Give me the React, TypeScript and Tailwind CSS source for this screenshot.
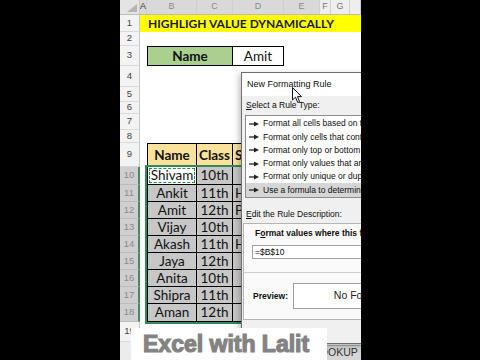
import type { ReactNode } from 'react'

const students = [
  { name: 'Shivam', cls: '10th', sub: '' },
  { name: 'Ankit', cls: '11th', sub: 'Hindi' },
  { name: 'Amit', cls: '12th', sub: 'Physics' },
  { name: 'Vijay', cls: '10th', sub: '' },
  { name: 'Akash', cls: '11th', sub: 'Hindi' },
  { name: 'Jaya', cls: '12th', sub: '' },
  { name: 'Anita', cls: '10th', sub: '' },
  { name: 'Shipra', cls: '11th', sub: '' },
  { name: 'Aman', cls: '12th', sub: '' },
]

// row 10..18 heights
const bodyHeights = ['h-[18px]', 'h-[17px]', 'h-[17px]', 'h-[17px]', 'h-[17px]', 'h-[17px]', 'h-[17px]', 'h-[17px]', 'h-[18px]']

const rowHeads = [
  { n: 1, h: 'h-[17px]' },
  { n: 2, h: 'h-[14px]' },
  { n: 3, h: 'h-[20px]' },
  { n: 4, h: 'h-[21px]' },
  { n: 5, h: 'h-[15px]' },
  { n: 6, h: 'h-[12px]' },
  { n: 7, h: 'h-[16px]' },
  { n: 8, h: 'h-[13px]' },
  { n: 9, h: 'h-[24px]' },
  ...bodyHeights.map((h, i) => ({ n: 10 + i, h })),
  { n: 19, h: 'h-[20px]' },
]

const rules = [
  'Format all cells based on their values',
  'Format only cells that contain',
  'Format only top or bottom ranked values',
  'Format only values that are above or below average',
  'Format only unique or duplicate values',
  'Use a formula to determine which cells to format',
]

function RuleArrow() {
  return (
    <svg width="10" height="6" viewBox="0 0 10 6" className="shrink-0">
      <line x1="0" y1="3" x2="6" y2="3" stroke="#222" strokeWidth="1.3" />
      <polygon points="5,0.5 10,3 5,5.5" fill="#222" />
    </svg>
  )
}

function ColumnHeader() {
  const cols: { w: string; label: string; light?: boolean }[] = [
    { w: 'w-[7px]', label: 'A' },
    { w: 'w-[50px]', label: 'B' },
    { w: 'w-[36px]', label: 'C' },
    { w: 'w-[51px]', label: 'D' },
    { w: 'w-[36px]', label: 'E' },
    { w: 'w-[11px]', label: 'F', light: true },
    { w: 'w-[19px]', label: 'G', light: true },
    { w: 'w-[11px]', label: '', light: true },
  ]
  return (
    <div className="flex h-[15px] border-b border-[#bdbdbd] font-['Liberation_Sans',sans-serif] text-[9px]">
      <div className="relative w-[20px] shrink-0 bg-[#e4e4e4] border-r border-[#c8c8c8]">
        <svg width="10" height="8" viewBox="0 0 10 8" className="absolute right-[2px] bottom-[2px]">
          <polygon points="10,0 10,8 0,8" fill="#b4b4b4" />
        </svg>
      </div>
      {cols.map((c, i) => (
        <div
          key={i}
          className={`${c.w} shrink-0 flex items-center justify-center border-r border-[#cfcfcf] ${
            c.light ? 'bg-[#eeeeee] text-[#777]' : 'bg-[#d9d9d9] text-[#8a8a8a]'
          } ${c.label === 'A' ? 'text-[#333]' : ''}`}
        >
          {c.label}
        </div>
      ))}
    </div>
  )
}

function Cell({ w, children, className = '' }: { w: string; children?: ReactNode; className?: string }) {
  return (
    <div className={`${w} shrink-0 h-full flex items-center justify-center border-r border-b border-black ${className}`}>
      {children}
    </div>
  )
}

function Sheet() {
  return (
    <div className="flex">
      {/* row headers */}
      <div className="w-[20px] shrink-0 flex flex-col font-['Liberation_Sans',sans-serif] text-[9.5px]">
        {rowHeads.map((r) => {
          const sel = r.n >= 10 && r.n <= 18
          return (
            <div
              key={r.n}
              className={`${r.h} flex items-center justify-center border-b ${
                sel
                  ? 'bg-[#cfcfcf] text-[#8b8b8b] border-[#bcbcbc] border-r-2 border-r-[#3f8f5d]'
                  : 'bg-[#f3f3f3] text-[#444] border-[#dadada] border-r border-r-[#c8c8c8]'
              }`}
            >
              {r.n}
            </div>
          )
        })}
      </div>

      {/* cells */}
      <div className="w-[221px] shrink-0 flex flex-col">
        {/* row 1 */}
        <div className="h-[17px] bg-[#ffff00] flex items-center pl-[8px] text-[12px] font-bold text-[#1a1a1a] whitespace-nowrap">
          HIGHLIGH VALUE DYNAMICALLY
        </div>
        <div className="h-[14px]" />
        {/* row 3 */}
        <div className="h-[20px] flex">
          <div className="w-[7px] shrink-0" />
          <div className="w-[86px] shrink-0 h-full flex items-center justify-center bg-[#a9d08e] border border-black text-[13.5px] font-bold text-[#111]">
            Name
          </div>
          <div className="w-[51px] shrink-0 h-full flex items-center justify-center bg-white border border-l-0 border-black text-[13.5px] text-[#111]">
            Amit
          </div>
        </div>
        <div className="h-[21px]" />
        <div className="h-[15px]" />
        <div className="h-[12px]" />
        <div className="h-[16px]" />
        <div className="h-[13px]" />

        {/* table rows 9..18 */}
        <div className="flex">
          <div className="w-[7px] shrink-0" />
          <div className="w-[137px] shrink-0 flex flex-col text-[13.5px] text-[#111]">
            <div className="h-[24px] flex border-t border-l border-black bg-[#fbe29a] font-bold">
              <Cell w="w-[49px]">Name</Cell>
              <Cell w="w-[36px]">Class</Cell>
              <Cell w="w-[51px]" className="justify-start pl-[2px]">
                Subject
              </Cell>
            </div>
            <div className="relative z-10 flex flex-col border-l border-black ring-2 ring-[#2f8a55]">
              {students.map((s, i) => (
                <div key={s.name} className={`${bodyHeights[i]} flex bg-[#c7c7c7]`}>
                  <Cell w="w-[49px]" className={i === 0 ? 'bg-white p-[1px]' : ''}>
                    {i === 0 ? (
                      <div className="w-full h-full flex items-center justify-center border border-dashed border-[#2f8a55]">
                        {s.name}
                      </div>
                    ) : (
                      s.name
                    )}
                  </Cell>
                  <Cell w="w-[36px]">{s.cls}</Cell>
                  <Cell w="w-[51px]" className="justify-start pl-[2px]">
                    {s.sub}
                  </Cell>
                </div>
              ))}
            </div>
          </div>
        </div>
        <div className="h-[20px]" />
      </div>
    </div>
  )
}

function TabBar() {
  return (
    <div className="h-[18px] flex bg-[#ececec] font-['Liberation_Sans',sans-serif]">
      <div className="w-[180px] shrink-0" />
      <div className="mt-[3px] h-[15px] w-[70px] shrink-0 flex items-center pl-[6px] bg-[#d6d6d6] border-t border-l border-[#a9a9a9] text-[10.5px] text-[#333]">
        VLOOKUP
      </div>
    </div>
  )
}

function Dialog() {
  return (
    <div className="absolute z-30 left-[121px] top-[72px] w-[210px] h-[272px] bg-[#f0f0f0] border border-[#6e6e6e] shadow-[-2px_2px_6px_rgba(0,0,0,0.25)] font-['Liberation_Sans',sans-serif] text-[#0d0d0d]">
      <div className="h-[23px] bg-white flex items-center pl-[5px] text-[9px]">New Formatting Rule</div>
      <div className="h-[17px] flex items-end pl-[4px] pb-[1px] text-[8.5px]">
        <span>
          <u>S</u>elect a Rule Type:
        </span>
      </div>
      <div className="ml-[3px] mt-[2px] h-[83px] bg-white border border-[#8c8c8c] py-[1px] text-[8.5px]">
        {rules.map((r, i) => (
          <div
            key={r}
            className={`h-[13.3px] flex items-center gap-[4px] pl-[3px] whitespace-nowrap ${i === 5 ? 'bg-[#d6d6d6]' : ''}`}
          >
            <RuleArrow />
            <span>{r}</span>
          </div>
        ))}
      </div>
      <div className="h-[24px] flex items-end pl-[4px] pb-[1px] text-[8.5px]">
        <span>
          <u>E</u>dit the Rule Description:
        </span>
      </div>
      <div className="ml-[1px] mt-[1px] h-[97px] bg-[#fafafa] border border-[#b4b4b4] flex flex-col">
        <div className="h-[16px] flex items-end pl-[11px] text-[8.5px] font-bold whitespace-nowrap">
          <span>
            F<u>o</u>rmat values where this formula is true:
          </span>
        </div>
        <div className="ml-[8px] mt-[5px] h-[14px] bg-white border border-[#a0a0a0] flex items-center pl-[2px] text-[8.5px]">
          =$B$10
        </div>
        <div className="mt-[13px] h-px bg-[#cfcfcf]" />
        <div className="mt-[10px] flex items-center">
          <div className="w-[49px] shrink-0 pl-[9px] text-[8.5px] font-bold">Preview:</div>
          <div className="w-[150px] shrink-0 h-[26px] bg-white border border-[#a0a0a0] flex items-center justify-center text-[10.5px] text-[#222]">
            No Format Set
          </div>
        </div>
      </div>
    </div>
  )
}

function Cursor() {
  return (
    <svg width="11" height="17" viewBox="0 0 11 17" className="absolute z-40 left-[172px] top-[87px]">
      <path d="M0.5 0.5 L0.5 13 L3.5 10.2 L5.7 15.5 L7.6 14.7 L5.5 9.6 L9.5 9.6 Z" fill="white" stroke="#111" strokeWidth="1" />
    </svg>
  )
}

export default function App() {
  return (
    <div className="w-[480px] h-[360px] bg-black flex overflow-hidden">
      <div className="w-[120px] shrink-0" />
      <div className="relative w-[241px] h-[360px] shrink-0 overflow-hidden bg-white font-['Lato',sans-serif]">
        <ColumnHeader />
        <Sheet />
        <TabBar />
        <Dialog />
        <Cursor />
        {/* channel watermark */}
        <div className="absolute z-50 left-[11px] top-[328px] w-[196px] h-[32px] bg-white flex items-center pl-[12px]">
          <span className="font-['Liberation_Sans',sans-serif] font-bold text-[23px] leading-none text-[#838383] [-webkit-text-stroke:1.2px_#838383] whitespace-nowrap">
            Excel with Lalit
          </span>
        </div>
      </div>
    </div>
  )
}
